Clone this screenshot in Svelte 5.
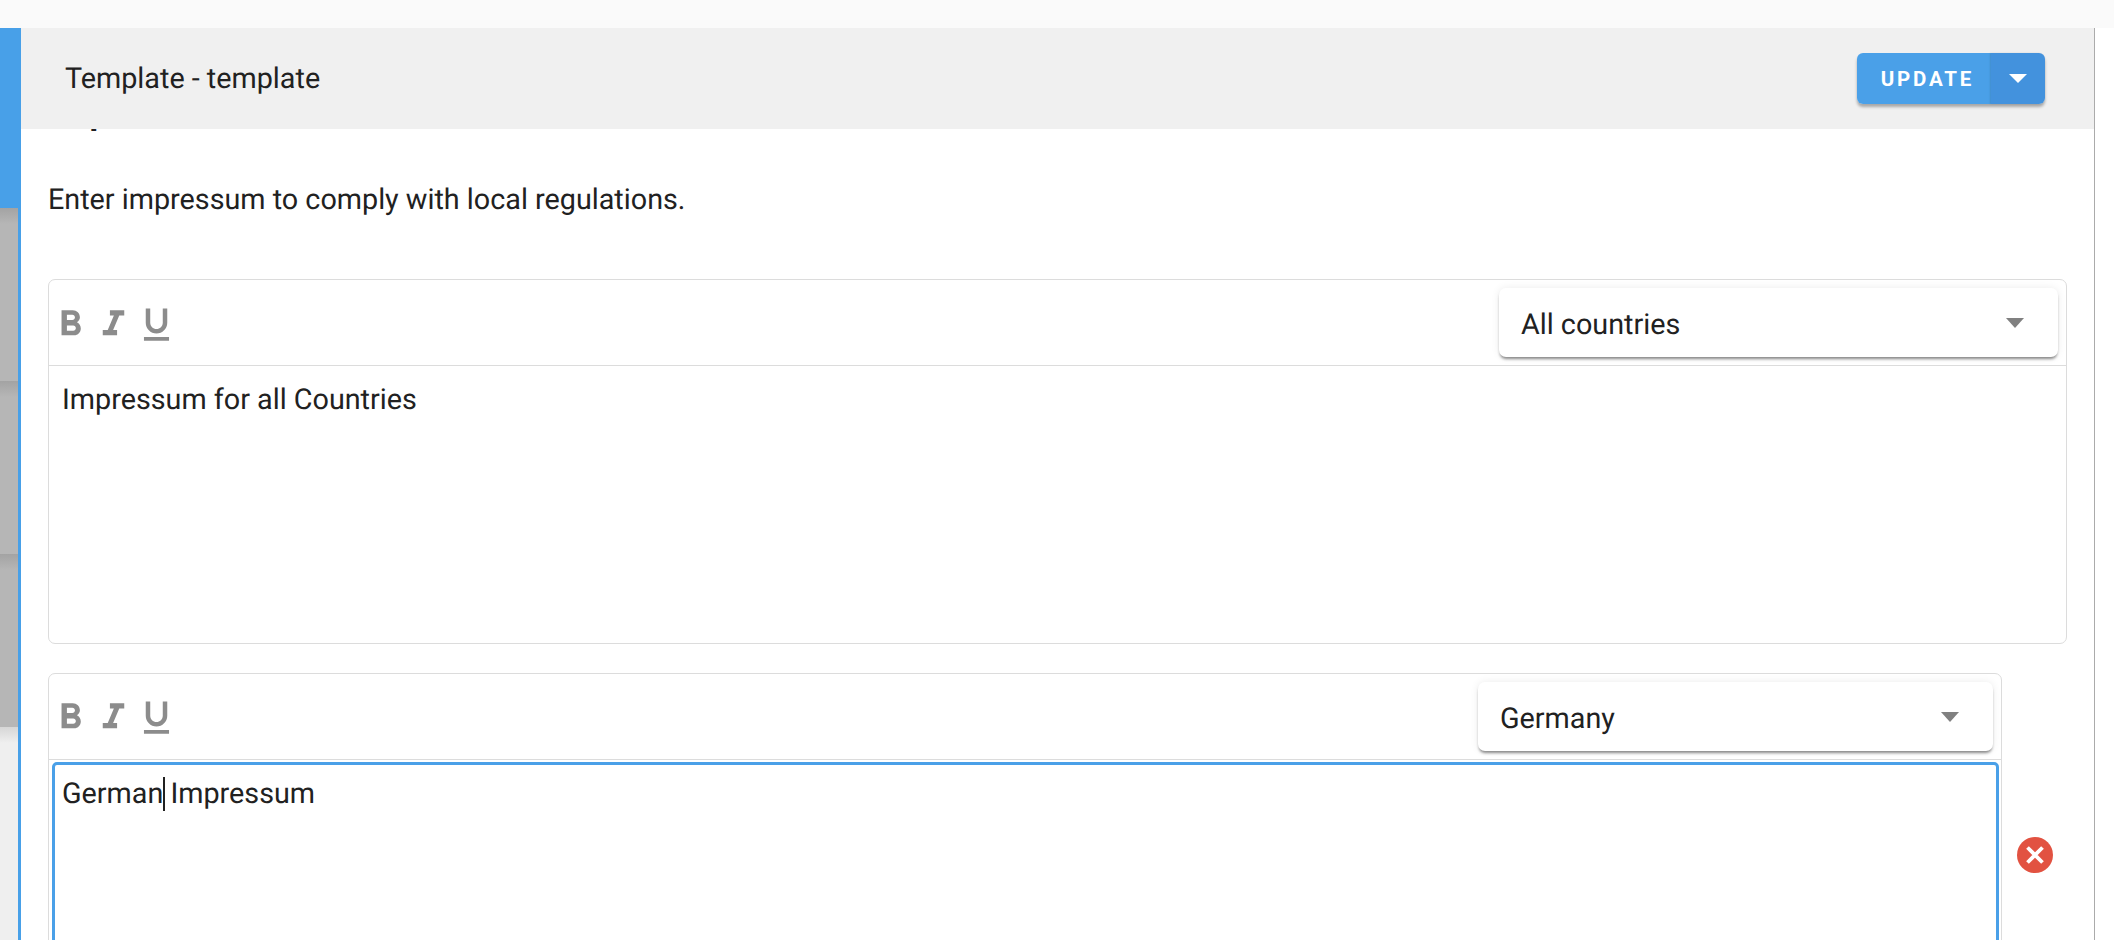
<script lang="ts">
const formats = [
  { name: "bold", d: "M15.6 10.79c.97-.67 1.65-1.77 1.65-2.79 0-2.26-1.75-4-4-4H7v14h7.04c2.09 0 3.71-1.7 3.71-3.79 0-1.52-.86-2.82-2.15-3.42zM10 6.5h3c.83 0 1.5.67 1.5 1.5s-.67 1.5-1.5 1.5h-3v-3zm3.5 9H10v-3h3.5c.83 0 1.5.67 1.5 1.5s-.67 1.5-1.5 1.5z" },
  { name: "italic", d: "M10 4v3h2.21l-3.42 8H6v3h8v-3h-2.21l3.42-8H18V4z" },
  { name: "underline", d: "M12 17c3.31 0 6-2.69 6-6V3h-2.5v8c0 1.93-1.57 3.5-3.5 3.5S8.5 12.93 8.5 11V3H6v8c0 3.31 2.69 6 6 6zm-7 2v2h14v-2H5z" },
];
</script>

{#snippet toolbar(country: string, modifier: string)}
  <div class="toolbar">
    <div class="toolbar__formats">
      {#each formats as f}
        <button class="format" aria-label={f.name}>
          <svg viewBox="0 0 24 24" width="43" height="43"><path d={f.d} /></svg>
        </button>
      {/each}
    </div>
    <div class="select {modifier}">
      <span>{country}</span>
      <i class="select__arrow"></i>
    </div>
  </div>
{/snippet}

<div class="page">
  <div class="topbar"></div>
  <div class="layout">
    <aside class="rail">
      <div class="rail__col">
        <div class="rail__head"></div>
        <div class="rail__item"></div>
        <div class="rail__item"></div>
        <div class="rail__item"></div>
        <div class="rail__rest"></div>
      </div>
    </aside>

    <main class="panel">
      <header class="panel__bar">
        <span class="panel__title">Template - template</span>
        <div class="split">
          <button class="split__main">UPDATE</button>
          <button class="split__more" aria-label="More"><i></i></button>
        </div>
      </header>

      <div class="panel__body">
        <h2>Impressum</h2>
        <p class="hint">Enter impressum to comply with local regulations.</p>

        <section class="editor">
          {@render toolbar("All countries", "select--wide")}
          <div class="editor__text">Impressum for all Countries</div>
        </section>

        <div class="row">
          <section class="editor editor--short">
            {@render toolbar("Germany", "select--narrow")}
            <div class="editor__text editor__text--focus">German<span class="caret"></span> Impressum</div>
          </section>
          <button class="remove" aria-label="Remove">
            <svg viewBox="0 0 36 36" width="36" height="36">
              <circle cx="18" cy="18" r="18" fill="#e25241" />
              <path d="M10.5 10.5l15 15M25.5 10.5l-15 15" stroke="#fff" stroke-width="3.8" fill="none" />
            </svg>
          </button>
        </div>
      </div>
    </main>
  </div>
</div>

<style>
  :global(body) {
    margin: 0;
    background: #fff;
  }

  .page {
    display: flex;
    flex-direction: column;
    height: 940px;
    overflow: hidden;
    font-family: Roboto, "Liberation Sans", sans-serif;
    color: #212121;
    text-rendering: geometricPrecision;
  }

  .topbar {
    flex: none;
    height: 28px;
    background: #fafafa;
  }

  .layout {
    flex: 1;
    display: flex;
    min-height: 0;
  }

  .rail {
    flex: none;
    width: 21px;
    background: #48a0e8;
  }

  .rail__col {
    display: flex;
    flex-direction: column;
    width: 18px;
    height: 100%;
  }

  .rail__head {
    flex: none;
    height: 180px;
  }

  .rail__item {
    flex: none;
    height: 173px;
    background: linear-gradient(#a3a3a3, #b6b6b6 16px);
  }

  .rail__rest {
    flex: 1;
    background: linear-gradient(#d6d6d6, #efefef 16px);
  }

  .panel {
    flex: none;
    width: 2073px;
    display: flex;
    flex-direction: column;
    border-right: 1px solid #ababab;
    min-height: 0;
  }

  .panel__bar {
    flex: none;
    height: 101px;
    display: flex;
    align-items: center;
    justify-content: space-between;
    padding: 0 49px 0 44px;
    background: #f0f0f0;
  }

  .panel__title {
    font-size: 28.75px;
  }

  .split {
    display: flex;
    height: 51px;
    border-radius: 6px;
    box-shadow: 0 3px 3px rgba(0, 0, 0, 0.3);
  }

  .split button {
    border: 0;
    padding: 0;
    color: #fff;
    font-family: inherit;
  }

  .split__main {
    box-sizing: border-box;
    width: 134px;
    background: #4aa0e8;
    border-radius: 6px 0 0 6px;
    font-size: 20.5px;
    font-weight: 700;
    letter-spacing: 2.8px;
  }

  .split .split__main {
    padding-left: 7px;
  }

  .split__more {
    display: flex;
    align-items: center;
    justify-content: center;
    width: 54px;
    background: #4392dd;
    border-radius: 0 6px 6px 0;
    box-shadow: -1px 0 2px rgba(0, 0, 0, 0.12);
  }

  .split__more i {
    width: 0;
    height: 0;
    border: 9px solid transparent;
    border-bottom: 0;
    border-top: 9px solid #fff;
  }

  .panel__body {
    flex: 1;
    min-height: 0;
    overflow: hidden;
    padding: 0 27px;
  }

  h2 {
    margin: -36px 0 0 2px;
    font-size: 34px;
    line-height: 40px;
    font-weight: 700;
  }

  .hint {
    margin: 49px 0 61px;
    font-size: 28.75px;
    line-height: 36px;
  }

  .editor {
    box-sizing: border-box;
    height: 365px;
    border: 1px solid #dcdcdc;
    border-radius: 7px;
    display: flex;
    flex-direction: column;
  }

  .editor--short {
    flex: none;
    width: 1954px;
  }

  .toolbar {
    flex: none;
    box-sizing: border-box;
    height: 86px;
    display: flex;
    align-items: center;
    justify-content: space-between;
    padding: 0 8px 0 0;
    border-bottom: 1px solid #dcdcdc;
  }

  .toolbar__formats {
    display: flex;
    margin-top: 3px;
  }

  .editor--short .toolbar__formats {
    margin-top: 1px;
  }

  .format {
    display: flex;
    width: 43px;
    height: 43px;
    padding: 0;
    border: 0;
    background: none;
  }

  .format path {
    fill: #8c8c8c;
  }

  .select {
    box-sizing: border-box;
    height: 69px;
    display: flex;
    align-items: center;
    justify-content: space-between;
    padding: 0 34px 0 22px;
    font-size: 28.75px;
    background: #fff;
    border-radius: 7px;
    box-shadow: 0 3px 3px -1px rgba(0, 0, 0, 0.45), 0 0 8px rgba(0, 0, 0, 0.08);
  }

  .select span {
    padding-top: 4px;
  }

  .select--wide {
    width: 559px;
  }

  .select--narrow {
    width: 515px;
  }

  .select__arrow {
    width: 0;
    height: 0;
    border: 9px solid transparent;
    border-bottom: 0;
    border-top: 10px solid #808080;
  }

  .editor__text {
    flex: 1;
    padding: 16px 13px;
    font-size: 28.75px;
    line-height: 36px;
  }

  .editor__text--focus {
    margin: 2px 2px 0 3px;
    padding: 11px 7px;
    border: 3px solid #4aa0e8;
    border-radius: 5px;
  }

  .caret {
    display: inline-block;
    width: 2px;
    height: 34px;
    margin: 0 -2px 0 0;
    background: #212121;
    vertical-align: -8px;
  }

  .row {
    display: flex;
    margin-top: 29px;
  }

  .remove {
    flex: 1;
    display: flex;
    align-items: center;
    justify-content: center;
    padding: 0 0 1px;
    border: 0;
    background: none;
  }
</style>
